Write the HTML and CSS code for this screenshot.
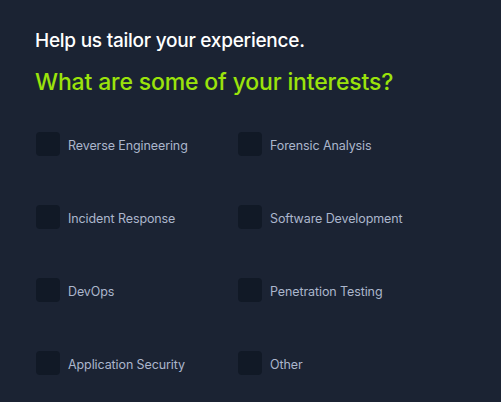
FILE: index.html
```html
<!DOCTYPE html>
<html>
<head>
<meta charset="utf-8">
<link rel="stylesheet" href="styles.css">
</head>
<body>
<main class="panel">
  <h1 class="intro">Help us tailor your experience.</h1>
  <h2 class="question">What are some of your interests?</h2>
  <div class="options">
    <label class="option"><span class="box"></span><span class="text">Reverse Engineering</span></label>
    <label class="option"><span class="box"></span><span class="text">Forensic Analysis</span></label>
    <label class="option"><span class="box"></span><span class="text">Incident Response</span></label>
    <label class="option"><span class="box"></span><span class="text">Software Development</span></label>
    <label class="option"><span class="box"></span><span class="text">DevOps</span></label>
    <label class="option"><span class="box"></span><span class="text">Penetration Testing</span></label>
    <label class="option"><span class="box"></span><span class="text">Application Security</span></label>
    <label class="option"><span class="box"></span><span class="text">Other</span></label>
  </div>
</main>
</body>
</html>
```
FILE: styles.css
```css
html, body {
  margin: 0;
  padding: 0;
  background: #1b2333;
  font-family: Inter, "Noto Sans", sans-serif;
}
.panel {
  width: 501px;
  height: 402px;
  box-sizing: border-box;
  padding: 29px 0 0 35px;
}
.intro {
  margin: 0;
  font-size: 19px;
  font-weight: 500;
  color: #ffffff;
  line-height: 24px;
  letter-spacing: -0.25px;
}
.question {
  margin: 14px 0 0 0;
  font-size: 23px;
  font-weight: 500;
  color: #9be30b;
  line-height: 30px;
  letter-spacing: -0.15px;
}
.options {
  display: grid;
  grid-template-columns: 202px 202px;
  row-gap: 49px;
  margin-top: 35px;
  padding-left: 1px;
}
.option {
  display: flex;
  align-items: center;
  gap: 8px;
  height: 24px;
}
.box {
  width: 24px;
  height: 24px;
  border-radius: 4px;
  background: #111926;
  flex: none;
}
.text {
  font-size: 12.5px;
  color: #abb6cc;
  letter-spacing: -0.1px;
  padding-top: 2px;
}
```
